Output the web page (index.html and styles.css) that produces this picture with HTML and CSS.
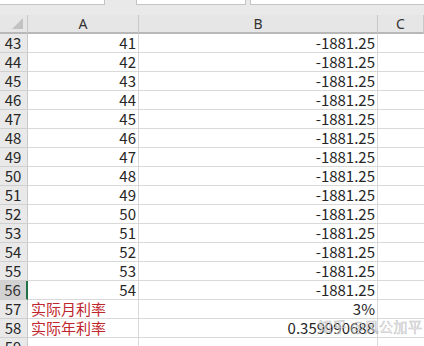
FILE: index.html
```html
<!DOCTYPE html>
<html>
<head>
<meta charset="utf-8">
<link rel="stylesheet" href="styles.css">
</head>
<body>
<div class="toolbar">
  <div class="box b1"></div>
  <div class="box b2"></div>
  <div class="box b3"></div>
</div>
<div class="sheet">
  <div class="corner"><span class="tri"></span></div>
  <div class="colhdr">A</div>
  <div class="colhdr">B</div>
  <div class="colhdr">C</div>

  <div class="rh">43</div><div class="c num">41</div><div class="c num">-1881.25</div><div class="c"></div>
  <div class="rh">44</div><div class="c num">42</div><div class="c num">-1881.25</div><div class="c"></div>
  <div class="rh">45</div><div class="c num">43</div><div class="c num">-1881.25</div><div class="c"></div>
  <div class="rh">46</div><div class="c num">44</div><div class="c num">-1881.25</div><div class="c"></div>
  <div class="rh">47</div><div class="c num">45</div><div class="c num">-1881.25</div><div class="c"></div>
  <div class="rh">48</div><div class="c num">46</div><div class="c num">-1881.25</div><div class="c"></div>
  <div class="rh">49</div><div class="c num">47</div><div class="c num">-1881.25</div><div class="c"></div>
  <div class="rh">50</div><div class="c num">48</div><div class="c num">-1881.25</div><div class="c"></div>
  <div class="rh">51</div><div class="c num">49</div><div class="c num">-1881.25</div><div class="c"></div>
  <div class="rh">52</div><div class="c num">50</div><div class="c num">-1881.25</div><div class="c"></div>
  <div class="rh">53</div><div class="c num">51</div><div class="c num">-1881.25</div><div class="c"></div>
  <div class="rh">54</div><div class="c num">52</div><div class="c num">-1881.25</div><div class="c"></div>
  <div class="rh">55</div><div class="c num">53</div><div class="c num">-1881.25</div><div class="c"></div>
  <div class="rh sel">56</div><div class="c num">54</div><div class="c num">-1881.25</div><div class="c"></div>
  <div class="rh">57</div><div class="c red">实际月利率</div><div class="c num">3%</div><div class="c"></div>
  <div class="rh">58</div><div class="c red">实际年利率</div><div class="c num">0.359990688</div><div class="c"></div>
  <div class="rh">59</div><div class="c"></div><div class="c"></div><div class="c"></div>
</div>
<div class="watermark">知乎 @风公加平</div>
</body>
</html>
```

FILE: styles.css
```css
html, body {
  margin: 0;
  padding: 0;
  background: #ffffff;
  overflow: hidden;
  width: 424px;
  height: 346px;
  position: relative;
  font-family: "Noto Sans CJK SC", "Noto Sans", sans-serif;
}

.toolbar {
  height: 15px;
  background: #e9e9e9;
  position: relative;
  display: flex;
  align-items: flex-start;
}

.box {
  height: 4px;
  background: #ffffff;
  border: 1px solid #c4c4c4;
  border-top: none;
  box-sizing: border-box;
  height: 5px;
}
.b1 { width: 106px; margin-left: -1px; }
.b2 { width: 110px; margin-left: 31px; }
.b3 { flex: 1; margin-left: 4px; margin-right: -1px; }

.sheet {
  display: grid;
  grid-template-columns: 28px 111px 239px 1fr;
  grid-auto-rows: 19px;
  grid-template-rows: 19px;
  font-size: 15px;
  color: #262626;
}

.corner, .colhdr {
  background: #e6e6e6;
  border-right: 1px solid #c9c9c9;
  border-bottom: 2px solid #b8b8b8;
  box-sizing: border-box;
  position: relative;
}
.colhdr {
  display: flex;
  align-items: center;
  justify-content: center;
  line-height: 17px;
  color: #333;
  font-family: "Noto Sans", "Noto Sans CJK SC", sans-serif;
  font-size: 14px;
}
.colhdr:last-child { border-right: none; }

.tri {
  position: absolute;
  right: 4px;
  bottom: 3px;
  width: 0;
  height: 0;
  border-left: 11px solid transparent;
  border-bottom: 11px solid #c2c2c2;
}

.rh {
  background: #e9e9e9;
  border-right: 1px solid #c9c9c9;
  border-bottom: 1px solid #d0d0d0;
  box-sizing: border-box;
  display: flex;
  align-items: center;
  justify-content: center;
  line-height: 18px;
  padding-right: 1px;
}
.rh.sel {
  background: #d2d2d2;
  border-right: 2px solid #217346;
  color: #333;
}

.c {
  border-right: 1px solid #d9d9d9;
  border-bottom: 1px solid #d9d9d9;
  box-sizing: border-box;
  line-height: 18px;
  white-space: nowrap;
  overflow: visible;
  padding: 0 2px 0 3px;
}
.c:nth-child(4n) { border-right: none; }
.num { text-align: right; }
.red { color: #c0272d; }

.watermark {
  position: absolute;
  left: 318px;
  top: 316px;
  font-size: 14px;
  color: rgba(255, 255, 255, 0.7);
  -webkit-text-stroke: 0.5px rgba(120, 120, 120, 0.55);
  letter-spacing: 0.5px;
  white-space: nowrap;
}
```
